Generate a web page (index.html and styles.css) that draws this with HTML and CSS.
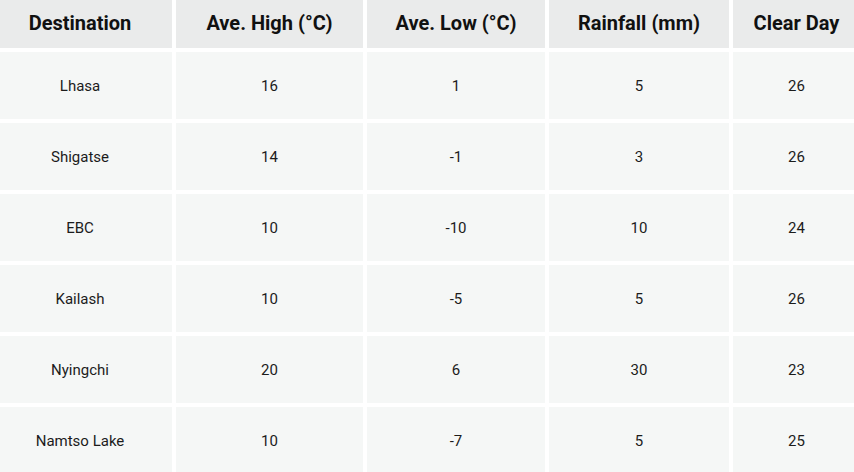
FILE: index.html
```html
<!DOCTYPE html>
<html>
<head>
<meta charset="utf-8">
<link rel="stylesheet" href="styles.css">
</head>
<body>
<div class="table">
  <div class="th">Destination</div>
  <div class="th">Ave. High (°C)</div>
  <div class="th">Ave. Low (°C)</div>
  <div class="th">Rainfall (mm)</div>
  <div class="th">Clear Day</div>

  <div class="td">Lhasa</div><div class="td">16</div><div class="td">1</div><div class="td">5</div><div class="td">26</div>
  <div class="td">Shigatse</div><div class="td">14</div><div class="td">-1</div><div class="td">3</div><div class="td">26</div>
  <div class="td">EBC</div><div class="td">10</div><div class="td">-10</div><div class="td">10</div><div class="td">24</div>
  <div class="td">Kailash</div><div class="td">10</div><div class="td">-5</div><div class="td">5</div><div class="td">26</div>
  <div class="td">Nyingchi</div><div class="td">20</div><div class="td">6</div><div class="td">30</div><div class="td">23</div>
  <div class="td">Namtso Lake</div><div class="td">10</div><div class="td">-7</div><div class="td">5</div><div class="td">25</div>
</div>
</body>
</html>
```

FILE: styles.css
```css
html, body {
  margin: 0;
  padding: 0;
  background: #ffffff;
  overflow: hidden;
}
body {
  width: 854px;
  height: 472px;
  font-family: Roboto, "Liberation Sans", sans-serif;
}
.table {
  display: grid;
  grid-template-columns: 184px 187px 178px 180px 127px;
  grid-template-rows: 48px repeat(6, 67px);
  column-gap: 4px;
  row-gap: 4px;
  width: 872px;
  margin-left: -12px;
}
.th {
  background: #eaebeb;
  color: #111111;
  font-weight: 700;
  font-size: 20px;
  display: flex;
  align-items: center;
  justify-content: center;
  padding-bottom: 2px;
  box-sizing: border-box;
}
.td {
  background: #f5f7f6;
  color: #1c1c1c;
  font-size: 15px;
  display: flex;
  align-items: center;
  justify-content: center;
  padding-top: 1px;
  box-sizing: border-box;
}
```
